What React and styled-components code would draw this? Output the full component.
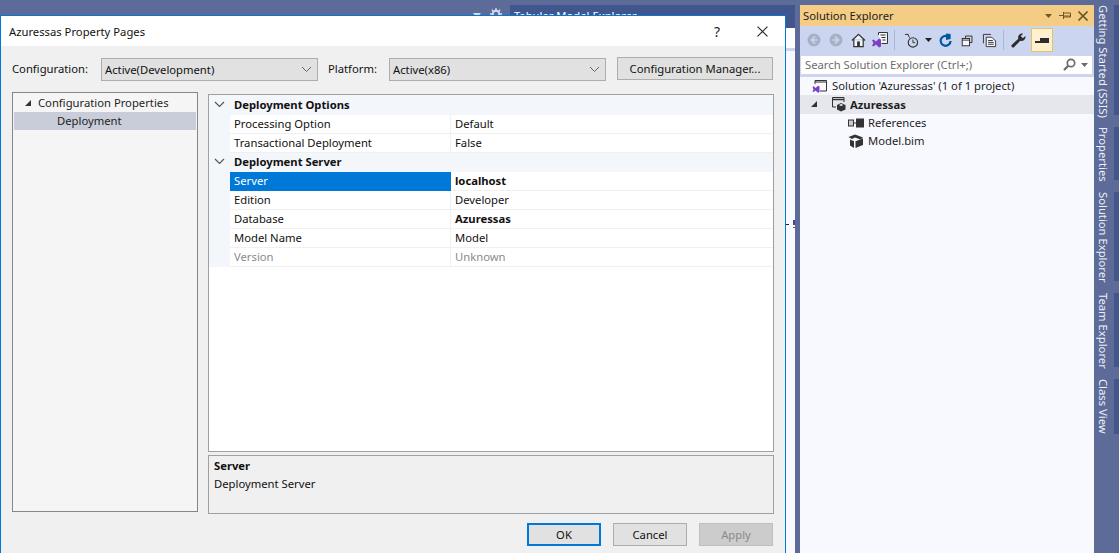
import React from 'react'
import styled, { createGlobalStyle } from 'styled-components'

const GlobalStyle = createGlobalStyle`
    html, body {
        margin: 0;
        padding: 0;
        background: #5d6b99;
    }
    * {
        box-sizing: border-box;
    }
`

const Page = styled.div`
    position: relative;
    display: flex;
    width: 1119px;
    height: 553px;
    overflow: hidden;
    background: #5d6b99;
    font-family: "Noto Sans", "Open Sans", sans-serif;
    font-size: 11.25px;
    color: #111;
`

/* behind the dialog */
const Editor = styled.div`
    position: relative;
    display: flex;
    justify-content: flex-end;
    width: 795px;
    margin-right: 5px;
    padding-top: 5px;
    flex-shrink: 0;
`
const EditorTools = styled.div`
    display: flex;
    align-items: flex-start;
    gap: 9px;
    margin-right: 8px;
    padding-top: 3px;
`
const ToolsCaret = styled.svg`
    margin-top: 5px;
`
const ModelPanel = styled.div`
    display: flex;
    flex-direction: column;
    width: 285px;
`
const ModelTitle = styled.div`
    height: 23px;
    padding: 3px 0 0 4px;
    background: #40568d;
    color: #fff;
    line-height: 16px;
`
const ModelBar = styled.div`
    height: 20px;
    background: #fff;
`
const ModelLine = styled.div`
    height: 3px;
    background: #ccd5f0;
`
const ModelBody = styled.div`
    flex: 1;
    background: #f8f9fe;
`
const EdgeMark = styled.svg`
    position: absolute;
    top: 218px;
    left: 786px;
`

/* dialog */
const Dialog = styled.div`
    position: absolute;
    top: 15px;
    left: 0;
    display: flex;
    flex-direction: column;
    width: 786px;
    height: 538px;
    background: #f0f0f0;
    border: 1px solid #0078d7;
    border-bottom: 0;
`
const TitleBar = styled.div`
    display: flex;
    align-items: center;
    height: 30px;
    padding: 0 17px 0 8px;
    background: #fff;
`
const DialogTitle = styled.div`
    flex: 1;
`
const HelpMark = styled.div`
    margin-right: 37px;
    font-size: 14px;
    color: #222;
`
const DialogBody = styled.div`
    display: flex;
    flex-direction: column;
    flex: 1;
    padding: 11px 11px 7px 11px;
`
const ConfigRow = styled.div`
    display: flex;
    align-items: flex-start;
    height: 24px;
`
const FieldLabel = styled.div`
    width: ${p => p.$width}px;
    flex-shrink: 0;
    line-height: 24px;
`
const Combo = styled.div`
    display: flex;
    align-items: center;
    justify-content: space-between;
    width: 217px;
    height: 23px;
    margin: 1px 10px 0 0;
    padding: 0 5px 0 3px;
    background: #e1e1e1;
    border: 1px solid #adadad;
`
const PushButton = styled.div`
    display: flex;
    align-items: center;
    justify-content: center;
    width: ${p => p.$width}px;
    height: 23px;
    background: ${p => p.$disabled ? '#cccccc' : '#e1e1e1'};
    border: ${p => p.$primary ? '2px solid #0078d7' : '1px solid #adadad'};
    border-color: ${p => p.$disabled ? '#bfbfbf' : ''};
    color: ${p => p.$disabled ? '#8a8a8a' : '#111'};
`
const ManagerButton = styled(PushButton)`
    margin-left: 1px;
`
const Columns = styled.div`
    display: flex;
    gap: 10px;
    flex: 1;
    margin-top: 11px;
`
const SideTree = styled.div`
    width: 186px;
    height: 420px;
    padding: 0 1px;
    background: #f5f5f5;
    border: 1px solid #828790;
`
const SideRow = styled.div`
    display: flex;
    align-items: center;
    height: ${p => p.$height}px;
    padding-left: ${p => p.$indent}px;
    padding-bottom: ${p => p.$selected ? 2 : 0}px;
    background: ${p => p.$selected ? '#c9cdda' : 'transparent'};
    color: #1e1e1e;
`
const Arrow = styled.svg`
    flex-shrink: 0;
    margin-right: ${p => p.$gap}px;
`
const RightColumn = styled.div`
    display: flex;
    flex-direction: column;
    gap: 3px;
    width: 566px;
    margin-top: 2px;
`
const PropertyGrid = styled.div`
    height: 358px;
    background: #fff;
    border: 1px solid #a0a0a0;
`
const CategoryRow = styled.div`
    display: flex;
    align-items: center;
    height: ${p => p.$height}px;
    padding-bottom: 2px;
    background: #f3f6fb;
    font-weight: 700;
`
const CategoryToggle = styled.div`
    display: flex;
    align-items: center;
    justify-content: center;
    width: 21px;
    margin-right: 4px;
`
const PropertyRow = styled.div`
    display: grid;
    grid-template-columns: 21px 221px 1fr;
    height: 19px;
    line-height: 18px;
    color: ${p => p.$muted ? '#8a8a8a' : '#111'};
`
const Gutter = styled.div`
    background: #f3f6fb;
`
const PropertyName = styled.div`
    padding-left: 4px;
    background: ${p => p.$selected ? '#0078d7' : '#fff'};
    color: ${p => p.$selected ? '#fff' : 'inherit'};
    border-bottom: ${p => p.$selected ? '0' : '1px solid #f0f0f0'};
    border-right: ${p => p.$selected ? '0' : '1px solid #f0f0f0'};
`
const PropertyValue = styled.div`
    padding-left: 4px;
    font-weight: ${p => p.$bold ? 700 : 400};
    border-bottom: 1px solid #f0f0f0;
`
const Description = styled.div`
    height: 59px;
    padding: 1px 5px;
    background: #f0f0f0;
    border: 1px solid #a0a0a0;
    line-height: 18px;
`
const DescriptionTitle = styled.div`
    font-weight: 700;
`
const ButtonRow = styled.div`
    position: absolute;
    right: 12px;
    bottom: 7px;
    display: flex;
    gap: 12px;
`

/* solution explorer */
const Explorer = styled.div`
    display: flex;
    flex-direction: column;
    width: 294px;
    margin-top: 5px;
    background: #f8f9fe;
    flex-shrink: 0;
`
const ExplorerHeader = styled.div`
    display: flex;
    align-items: center;
    height: 21px;
    padding: 0 6px 0 3px;
    background: #f5cc84;
    color: #1e1e1e;
`
const ExplorerTitle = styled.div`
    flex: 1;
`
const HeaderIcons = styled.div`
    display: flex;
    align-items: center;
    gap: 7px;
`
const Toolbar = styled.div`
    display: flex;
    align-items: center;
    height: 28px;
    padding-left: 3px;
    background: #ccd5f0;
`
const ToolIcon = styled.div`
    display: flex;
    align-items: center;
    justify-content: center;
    width: ${p => p.$width || 22}px;
    height: 24px;
    background: ${p => p.$active ? '#fff0d0' : 'transparent'};
    border: ${p => p.$active ? '1px solid #e5c365' : '0'};
`
const ToolSeparator = styled.div`
    width: 1px;
    height: 20px;
    margin: 0 ${p => p.$gap}px;
    background: #a9b4d6;
`
const SearchWrap = styled.div`
    padding: 1px 1px 2px 0;
    background: #ccd5f0;
`
const SearchBox = styled.div`
    display: flex;
    align-items: center;
    justify-content: space-between;
    height: 20px;
    padding: 0 4px 1px 4px;
    background: #fff;
    border: 1px solid #d0d7e8;
    color: #6d6d6d;
`
const SearchIcons = styled.div`
    display: flex;
    align-items: center;
    gap: 5px;
`
const ExplorerTree = styled.div`
    flex: 1;
`
const TreeRow = styled.div`
    display: flex;
    align-items: center;
    gap: ${p => p.$gap ?? 4}px;
    height: ${p => p.$height || 18}px;
    padding-left: ${p => p.$indent}px;
    padding-bottom: 1px;
    background: ${p => p.$selected ? '#e6e7ed' : 'transparent'};
    font-weight: ${p => p.$bold ? 700 : 400};
    color: #1e1e1e;
`
const ProjectName = styled.span`
    margin-left: 3px;
`

/* side strip */
const SideStrip = styled.div`
    display: flex;
    flex-direction: column;
    gap: 12px;
    width: 25px;
    padding-top: 5px;
`
const SideTab = styled.div`
    width: 25px;
    height: ${p => p.$height}px;
    border-right: 5px solid #40568d;
    padding-right: 2px;
    writing-mode: vertical-rl;
    color: #eef0f8;
    line-height: 17px;
    white-space: nowrap;
`

const Chevron = () => (
    <svg width="11" height="7" viewBox="0 0 11 7">
        <path d="M1 1l4.500 4.500L10 1" fill="none" stroke="#555" strokeWidth="1.2" />
    </svg>
)
const ComboChevron = () => (
    <svg width="11" height="7" viewBox="0 0 11 7">
        <path d="M1 1l4.500 4.500L10 1" fill="none" stroke="#666" strokeWidth="1" />
    </svg>
)
const TreeArrow = ({ gap }) => (
    <Arrow $gap={gap} width="8" height="8" viewBox="0 0 8 8">
        <path d="M7 1v6H1z" fill="#333" />
    </Arrow>
)
const NavCircle = ({ back }) => (
    <svg width="14" height="14" viewBox="0 0 14 14">
        <circle cx="7" cy="7" r="6.500" fill="#a9afc4" />
        <path d={back ? 'M8 3.500L4.500 7 8 10.500M5 7h5.500' : 'M6 3.500L9.500 7 6 10.500M9 7H3.500'} fill="none" stroke="#ccd5f0" strokeWidth="1.7" />
    </svg>
)
const HomeIcon = () => (
    <svg width="15" height="15" viewBox="0 0 16 16">
        <path d="M1 8l7-6.500L15 8M3 6.500V14.500h10V6.500" fill="#f4f5fa" stroke="#333" strokeWidth="1.3" />
        <rect x="6.500" y="9" width="3" height="5.500" fill="#333" />
    </svg>
)
const VsDocIcon = () => (
    <svg width="16" height="16" viewBox="0 0 16 16">
        <path d="M6.500 3V0.500h9v11H9.500" fill="#f4f5fa" stroke="#333" />
        <path d="M8.500 3h5M9.500 5.500h4M10.500 8h3" stroke="#333" />
        <path d="M0 8.500l1.500-1L4 9.500l3-3 2 1v7l-2 1-3-3-2.500 2L0 13.500l1.500-2.500z" fill="#7b3fc4" />
    </svg>
)
const ClockIcon = () => (
    <svg width="15" height="15" viewBox="0 0 16 16">
        <circle cx="9.500" cy="10" r="5" fill="none" stroke="#333" strokeWidth="1.2" />
        <path d="M9.500 7v3.300H12M1 1.500h4M4 1.500L6 5" fill="none" stroke="#333" />
    </svg>
)
const DropCaret = ({ color = '#222' }) => (
    <svg width="7" height="4" viewBox="0 0 7 4">
        <path d="M0 0h7L3.500 4z" fill={color} />
    </svg>
)
const RefreshIcon = () => (
    <svg width="15" height="15" viewBox="0 0 16 16">
        <path d="M10.500 3.600A5.300 5.300 0 1 0 13.400 8.600" fill="none" stroke="#005a9e" strokeWidth="2.400" />
        <path d="M8.500 0.500v7l5-1V1z" fill="#005a9e" />
    </svg>
)
const CollapseIcon = () => (
    <svg width="13" height="13" viewBox="0 0 16 16">
        <path d="M5.500 5V2.500h8v8H11" fill="none" stroke="#333" strokeWidth="1.2" />
        <rect x="1.500" y="5.500" width="9" height="9" fill="#f4f5fa" stroke="#333" strokeWidth="1.2" />
        <path d="M1.500 7.500h9" stroke="#333" strokeWidth="1.2" />
    </svg>
)
const CopyIcon = () => (
    <svg width="15" height="15" viewBox="0 0 16 16">
        <path d="M1.500 11V1.500h8" fill="none" stroke="#333" />
        <path d="M4.500 14.500V4.500h6l4 4v6z" fill="#f4f5fa" stroke="#333" />
        <path d="M6.500 8h5M6.500 10h6M6.500 12h6" stroke="#333" />
    </svg>
)
const WrenchIcon = () => (
    <svg width="15" height="15" viewBox="0 0 16 16">
        <path d="M15.500 4.200a4.300 4.300 0 0 1-5.700 4L3.400 15a1.600 1.600 0 0 1-2.300 0l-.1-.1a1.600 1.600 0 0 1 0-2.300l6.800-6.400A4.300 4.300 0 0 1 13 .7L10.400 3.300l2.300 2.300 2.500-2.500z" fill="#2d2d2d" />
    </svg>
)
const PendingIcon = () => (
    <svg width="14" height="5" viewBox="0 0 14 5">
        <rect x="5" y="0" width="9" height="5" fill="#2d2d2d" />
        <rect x="0" y="3" width="14" height="2" fill="#2d2d2d" />
    </svg>
)
const SearchIcon = () => (
    <svg width="13" height="13" viewBox="0 0 13 13">
        <circle cx="8" cy="5" r="3.700" fill="none" stroke="#6a6a6a" strokeWidth="1.7" />
        <path d="M5.300 7.700L1 12" stroke="#6a6a6a" strokeWidth="2.200" />
    </svg>
)
const PinIcon = () => (
    <svg width="12" height="9" viewBox="0 0 12 9">
        <path d="M0 4.500h4M4.500 1v7M4.500 2h7v4h-7M4.500 5h7" fill="none" stroke="#6e5a28" />
    </svg>
)
const CloseGlyph = ({ size, color, width }) => (
    <svg width={size} height={size} viewBox="0 0 10 10">
        <path d="M0.500 0.500l9 9M9.500 0.500l-9 9" stroke={color} strokeWidth={width} />
    </svg>
)
const SolutionIcon = () => (
    <svg width="16" height="16" viewBox="0 0 16 16">
        <path d="M3 6V2.500h11.500V13H8" fill="none" stroke="#333" />
        <path d="M3 4h11.500" stroke="#333" />
        <path d="M0.500 9l1.300-.8L3.500 10l2.500-2.300 1.500.7v5.700l-1.500.7L3.500 12.500l-1.700 1.600-1.300-.7 1-2z" fill="#7b3fc4" />
    </svg>
)
const ProjectIcon = () => (
    <svg width="16" height="16" viewBox="0 0 16 16">
        <path d="M1.500 11V1.500h11.500V6M1.500 11H5" fill="none" stroke="#333" />
        <path d="M1.500 3.500h11.500" stroke="#333" strokeWidth="1.500" />
        <path d="M6 9L10 7l4.500 2v4.500L10 15.500 6 13.500z" fill="#333" />
        <path d="M8 9l2-1 2.500 1-2.500 1z" fill="#f8f9fe" />
    </svg>
)
const ReferencesIcon = () => (
    <svg width="16" height="10" viewBox="0 0 16 10">
        <rect x="0.500" y="2" width="5" height="6" fill="#c9c9d0" stroke="#333" />
        <path d="M6 5h2" stroke="#333" />
        <rect x="8" y="0.500" width="8" height="9" fill="#333" />
    </svg>
)
const ModelIcon = () => (
    <svg width="16" height="14" viewBox="0 0 16 14">
        <path d="M0.500 3L7 0.500 15 3.500 12.500 5.500 7 3.500 4 5z" fill="#333" />
        <path d="M2 5.500l4 1.800V14L2 11.500z" fill="#333" />
        <path d="M7.500 7.300L15 4.500v6.500L7.500 14z" fill="#333" />
    </svg>
)
const GearIcon = () => (
    <svg width="12" height="12" viewBox="0 0 13 13">
        <circle cx="6.500" cy="6.500" r="3.500" fill="none" stroke="#d7dcec" strokeWidth="2" />
        <path d="M6.500 0v2.500M6.500 10.500V13M0 6.500h2.500M10.500 6.500H13M2 2l1.700 1.700M9.300 9.300L11 11M11 2L9.300 3.700M3.700 9.300L2 11" stroke="#d7dcec" strokeWidth="1.500" />
    </svg>
)

const rowsOptions = [
    { name: 'Processing Option', value: 'Default' },
    { name: 'Transactional Deployment', value: 'False' },
]
const rowsServer = [
    { name: 'Server', value: 'localhost', bold: true, selected: true },
    { name: 'Edition', value: 'Developer' },
    { name: 'Database', value: 'Azuressas', bold: true },
    { name: 'Model Name', value: 'Model' },
    { name: 'Version', value: 'Unknown', muted: true },
]
const sideTabs = [
    { label: 'Getting Started (SSIS)', height: 110 },
    { label: 'Properties', height: 53 },
    { label: 'Solution Explorer', height: 89 },
    { label: 'Team Explorer', height: 74 },
    { label: 'Class View', height: 55 },
]

function PropertyLine({ row }) {
    return (
        <PropertyRow $muted={row.muted}>
            <Gutter />
            <PropertyName $selected={row.selected}>{row.name}</PropertyName>
            <PropertyValue $bold={row.bold}>{row.value}</PropertyValue>
        </PropertyRow>
    )
}

export default function App() {
    return (
        <Page>
            <GlobalStyle />
            <Editor>
                <EditorTools>
                    <ToolsCaret width="8" height="5" viewBox="0 0 8 5">
                        <path d="M0 0h8L4 5z" fill="#d7dcec" />
                    </ToolsCaret>
                    <GearIcon />
                </EditorTools>
                <ModelPanel>
                    <ModelTitle>Tabular Model Explorer</ModelTitle>
                    <ModelBar />
                    <ModelLine />
                    <ModelBody />
                </ModelPanel>
                <EdgeMark width="9" height="12" viewBox="0 0 9 12">
                    <rect x="0" y="6" width="3" height="1" fill="#222" />
                    <rect x="7" y="2" width="2" height="5" fill="#4a3fa0" />
                    <rect x="7" y="9" width="2" height="1" fill="#a03050" />
                </EdgeMark>
            </Editor>

            <Explorer>
                <ExplorerHeader>
                    <ExplorerTitle>Solution Explorer</ExplorerTitle>
                    <HeaderIcons>
                        <DropCaret color="#6e5a28" />
                        <PinIcon />
                        <CloseGlyph size={10} color="#6e5a28" width={1.6} />
                    </HeaderIcons>
                </ExplorerHeader>
                <Toolbar>
                    <ToolIcon $width={22}><NavCircle back /></ToolIcon>
                    <ToolIcon $width={22}><NavCircle /></ToolIcon>
                    <ToolIcon $width={22}><HomeIcon /></ToolIcon>
                    <ToolIcon $width={22}><VsDocIcon /></ToolIcon>
                    <ToolSeparator $gap={3} />
                    <ToolIcon $width={26}><ClockIcon /></ToolIcon>
                    <ToolIcon $width={8}><DropCaret /></ToolIcon>
                    <ToolIcon $width={26}><RefreshIcon /></ToolIcon>
                    <ToolIcon $width={18}><CollapseIcon /></ToolIcon>
                    <ToolIcon $width={26}><CopyIcon /></ToolIcon>
                    <ToolSeparator $gap={1} />
                    <ToolIcon $width={26}><WrenchIcon /></ToolIcon>
                    <ToolIcon $width={22} $active><PendingIcon /></ToolIcon>
                </Toolbar>
                <SearchWrap>
                    <SearchBox>
                        Search Solution Explorer (Ctrl+;)
                        <SearchIcons>
                            <SearchIcon />
                            <DropCaret color="#6a6a6a" />
                        </SearchIcons>
                    </SearchBox>
                </SearchWrap>
                <ExplorerTree>
                    <TreeRow $indent={12}>
                        <SolutionIcon />
                        Solution 'Azuressas' (1 of 1 project)
                    </TreeRow>
                    <TreeRow $indent={10} $selected $bold $height={19} $gap={0}>
                        <TreeArrow gap={13} />
                        <ProjectIcon />
                        <ProjectName>Azuressas</ProjectName>
                    </TreeRow>
                    <TreeRow $indent={48} $height={18}>
                        <ReferencesIcon />
                        References
                    </TreeRow>
                    <TreeRow $indent={48} $height={18}>
                        <ModelIcon />
                        Model.bim
                    </TreeRow>
                </ExplorerTree>
            </Explorer>

            <SideStrip>
                {sideTabs.map(tab => (
                    <SideTab key={tab.label} $height={tab.height}>{tab.label}</SideTab>
                ))}
            </SideStrip>

            <Dialog>
                <TitleBar>
                    <DialogTitle>Azuressas Property Pages</DialogTitle>
                    <HelpMark>?</HelpMark>
                    <CloseGlyph size={11} color="#222" width={1} />
                </TitleBar>
                <DialogBody>
                    <ConfigRow>
                        <FieldLabel $width={89}>Configuration:</FieldLabel>
                        <Combo>Active(Development)<ComboChevron /></Combo>
                        <FieldLabel $width={61}>Platform:</FieldLabel>
                        <Combo>Active(x86)<ComboChevron /></Combo>
                        <ManagerButton $width={156}>Configuration Manager...</ManagerButton>
                    </ConfigRow>
                    <Columns>
                        <SideTree>
                            <SideRow $height={19} $indent={10}>
                                <TreeArrow gap={6} />
                                Configuration Properties
                            </SideRow>
                            <SideRow $height={18} $indent={43} $selected>Deployment</SideRow>
                        </SideTree>
                        <RightColumn>
                            <PropertyGrid>
                                <CategoryRow $height={20}>
                                    <CategoryToggle><Chevron /></CategoryToggle>
                                    Deployment Options
                                </CategoryRow>
                                {rowsOptions.map(row => <PropertyLine key={row.name} row={row} />)}
                                <CategoryRow $height={19}>
                                    <CategoryToggle><Chevron /></CategoryToggle>
                                    Deployment Server
                                </CategoryRow>
                                {rowsServer.map(row => <PropertyLine key={row.name} row={row} />)}
                            </PropertyGrid>
                            <Description>
                                <DescriptionTitle>Server</DescriptionTitle>
                                Deployment Server
                            </Description>
                        </RightColumn>
                    </Columns>
                    <ButtonRow>
                        <PushButton $width={74} $primary>OK</PushButton>
                        <PushButton $width={74}>Cancel</PushButton>
                        <PushButton $width={74} $disabled>Apply</PushButton>
                    </ButtonRow>
                </DialogBody>
            </Dialog>
        </Page>
    )
}
